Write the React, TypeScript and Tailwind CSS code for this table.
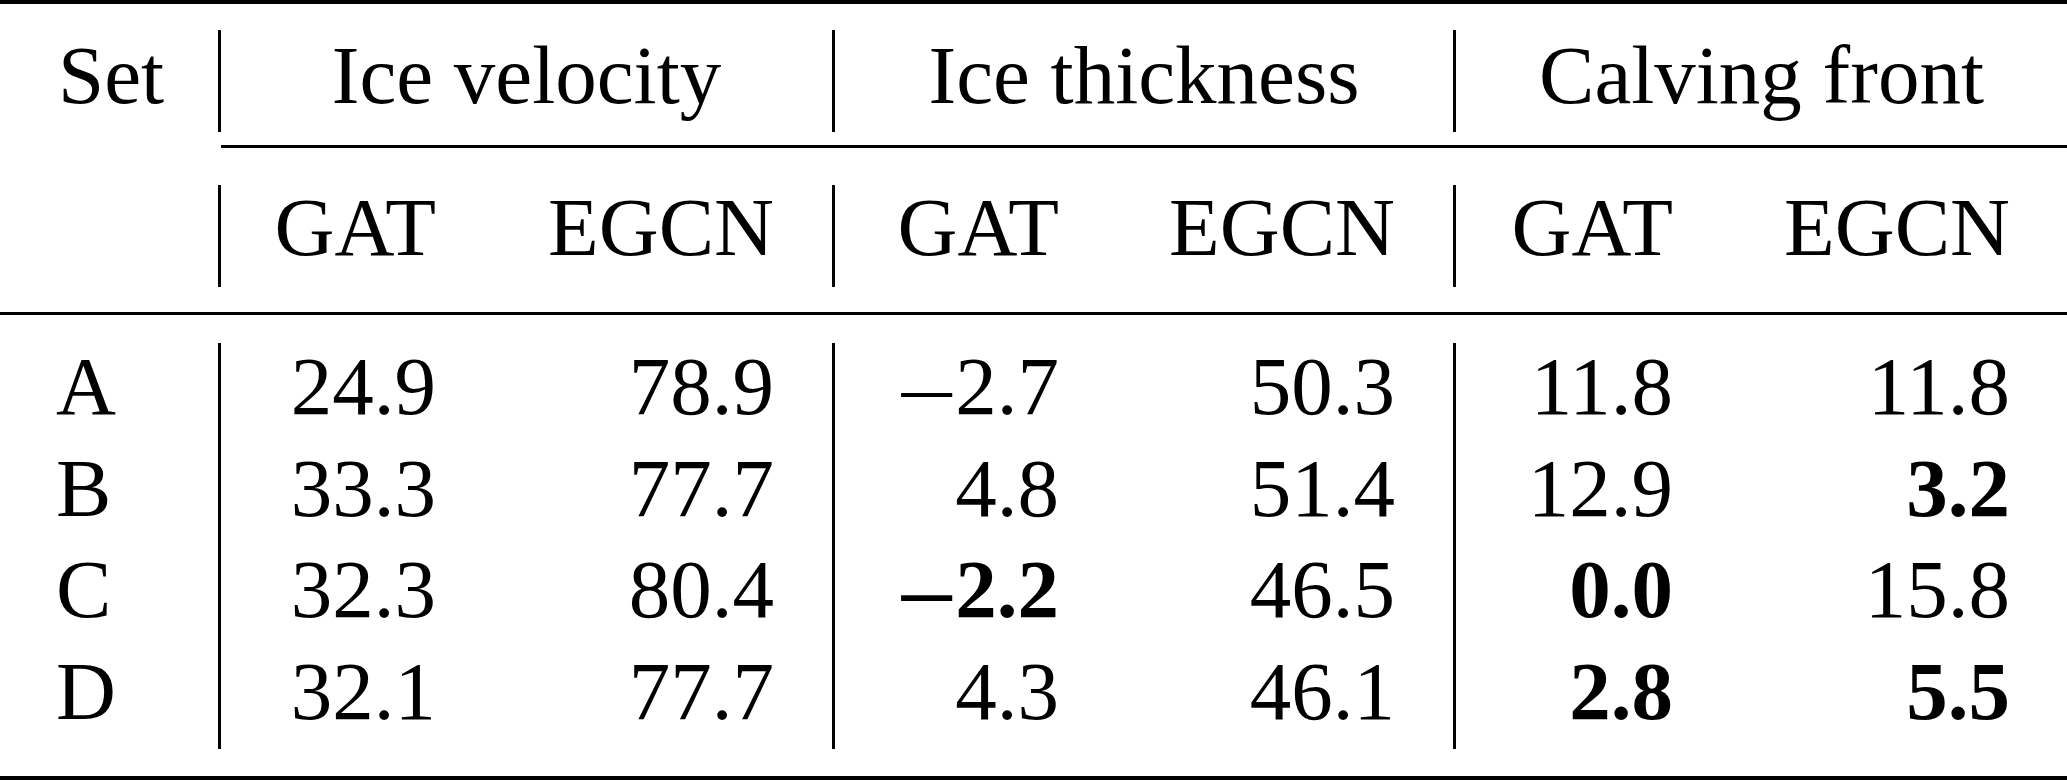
import React from "react";

type Cell = { v: string; b?: boolean; neg?: boolean };

const rows: { set: string; cells: Cell[] }[] = [
  { set: "A", cells: [{ v: "24.9" }, { v: "78.9" }, { v: "2.7", neg: true }, { v: "50.3" }, { v: "11.8" }, { v: "11.8" }] },
  { set: "B", cells: [{ v: "33.3" }, { v: "77.7" }, { v: "4.8" }, { v: "51.4" }, { v: "12.9" }, { v: "3.2", b: true }] },
  { set: "C", cells: [{ v: "32.3" }, { v: "80.4" }, { v: "2.2", b: true, neg: true }, { v: "46.5" }, { v: "0.0", b: true }, { v: "15.8" }] },
  { set: "D", cells: [{ v: "32.1" }, { v: "77.7" }, { v: "4.3" }, { v: "46.1" }, { v: "2.8", b: true }, { v: "5.5", b: true }] },
];

const colCls = [
  "w-[275px] border-l-[3px] border-black pr-[57px] text-right",
  "w-[339px] pr-[58px] text-right",
  "w-[284px] border-l-[3px] border-black pr-[57px] text-right",
  "w-[337px] pr-[58px] text-right",
  "w-[277px] border-l-[3px] border-black pr-[57px] text-right",
  "w-[337px] pr-[57px] text-right",
];

export default function App() {
  return (
    <div className="w-[2067px] h-[780px] bg-white text-black font-['Liberation_Serif','Times_New_Roman',serif] text-[83px] overflow-hidden">
      {/* top rule */}
      <div className="h-[4px] bg-black" />
      <div className="h-[26px]" />
      {/* header row 1 */}
      <div className="flex h-[102px] leading-[90px]">
        <div className="w-[218px] pl-[58px]">Set</div>
        <div className="w-[614px] border-l-[3px] border-black text-center">Ice velocity</div>
        <div className="w-[621px] border-l-[3px] border-black text-center">Ice thickness</div>
        <div className="w-[614px] border-l-[3px] border-black text-center">Calving front</div>
      </div>
      <div className="h-[13px]" />
      {/* cmidrule */}
      <div className="ml-[221px] h-[3px] bg-black" />
      <div className="h-[37px]" />
      {/* header row 2 */}
      <div className="flex h-[102px] leading-[84px]">
        <div className="w-[218px]" />
        {["GAT", "EGCN", "GAT", "EGCN", "GAT", "EGCN"].map((t, i) => (
          <div key={i} className={colCls[i]}>
            {t}
          </div>
        ))}
      </div>
      <div className="h-[25px]" />
      {/* midrule */}
      <div className="h-[3px] bg-black" />
      <div className="h-[28px]" />
      {/* body */}
      <div className="flex flex-col">
        {rows.map((r) => (
          <div key={r.set} className="flex h-[101.5px] leading-[86px]">
            <div className="w-[218px] pl-[56px]">{r.set}</div>
            {r.cells.map((c, i) => (
              <div key={i} className={colCls[i] + (c.b ? " font-bold" : "")}>
                {c.neg ? (
                  <span className="inline-block origin-right scale-x-[1.2] mr-[4px]">{"\u2013"}</span>
                ) : null}
                {c.v}
              </div>
            ))}
          </div>
        ))}
      </div>
      <div className="h-[27px]" />
      {/* bottom rule */}
      <div className="h-[4px] bg-black" />
    </div>
  );
}
